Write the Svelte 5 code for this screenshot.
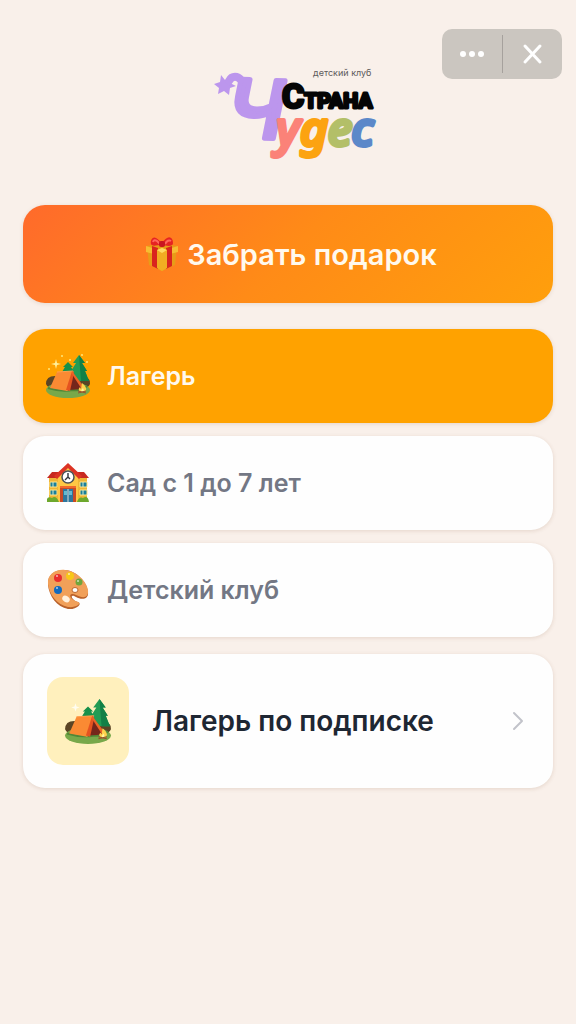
<script>
  const sections = [
    { id: 'camp', label: 'Лагерь' },
    { id: 'garden', label: 'Сад с 1 до 7 лет' },
    { id: 'club', label: 'Детский клуб' }
  ];
  let selected = $state('camp');
</script>

{#snippet tent()}
  <path d="M1 31Q1 22 12 23L38 23Q46 25 45 31Q42 38 23 38Q4 38 1 31Z" fill="#5b4525" />
  <path d="M34 2L28 10H31L26 18H29L25 28H44L40 18H42L37 10H40Z" fill="#229c55" />
  <path d="M34 2L40 10H37L42 18H40L44 28H36Z" fill="#128047" />
  <path d="M23 9L18 14H20L17 19H29L26 14H28Z" fill="#16904a" />
  <path d="M34 28h2v5h-2z" fill="#6c4521" />
  <ellipse cx="23" cy="37" rx="22" ry="8" fill="#78a84a" />
  <path d="M3 35Q16 39 28 37Q37 38 42 33" fill="none" stroke="#508737" stroke-width="2" />
  <path d="M27 18L38 36L24 37Z" fill="#75261b" />
  <path d="M12 19L28 18L22 38L5 35Z" fill="#fa8a33" />
  <path d="M12 19L28 18L22 38" fill="none" stroke="#ffa04f" stroke-width="1" />
  <path d="M27 18L29 20L25 38L21 37Z" fill="#e55320" />
  <path d="M27 18L39 34L36 35L27 21Z" fill="#ec6426" />
  <path d="M37 30Q42 34 41 37Q40 40 36 39Q32 37 35 34L36 36Z" fill="#ffd24c" />
  <path d="M38 35Q40 39 37 39Q35 38 38 35Z" fill="#fff3a1" />
  <path d="M33 40L41 38M33 38L41 40" stroke="#98502b" stroke-width="1" />
{/snippet}

<main class="page">
  <div class="window-controls">
    <button type="button" aria-label="Меню">
      <svg viewBox="0 0 24 24" width="24" height="24" fill="currentColor"><circle cx="3" cy="12" r="3" /><circle cx="12" cy="12" r="3" /><circle cx="21" cy="12" r="3" /></svg>
    </button>
    <button type="button" aria-label="Закрыть">
      <svg viewBox="0 0 24 24" width="24" height="24" fill="none" stroke="currentColor" stroke-width="3" stroke-linecap="round"><path d="M5 4L20 20M20 4L5 20" /></svg>
    </button>
  </div>

  <header class="brand">
    <svg class="logo" viewBox="0 0 164 104" role="img" aria-label="Детский клуб Страна Чудес">
      <path d="M8 11L12 16L18 13L17 19L23 22L17 24L16 31L11 27L5 30L6 24L1 20L7 18Z" fill="#bc96ed" />
      <path class="flourish" d="M16 17C19 11 25 12 28 16" />
      <text class="big" x="15" y="74" transform="rotate(2 40 50)">Ч</text>
      <text class="tagline" x="100" y="12">детский клуб</text>
      <text class="wonders" lang="sr" x="63" y="82"><tspan class="coral">у</tspan><tspan class="amber">д</tspan><tspan class="olive">е</tspan><tspan class="blue">с</tspan></text>
      <text class="strana" x="69" y="44"><tspan class="cap">С</tspan>ТРАНА</text>
    </svg>
  </header>

  <button class="gift" type="button">
    <svg viewBox="0 0 34 36" width="34" height="36" aria-hidden="true">
      <path d="M2 10L17 7L32 10L30 29L17 35L4 29Z" fill="#e89c18" />
      <path d="M1 10L17 15L33 10V16L17 20L1 16Z" fill="#f7bd32" />
      <path d="M7 10L13 12V33L7 30ZM21 12L27 10V30L21 33Z" fill="#d9251e" />
      <path d="M12 14L17 12L22 14V32L17 35L12 32Z" fill="#f1ad22" />
      <path d="M12 14L17 12L22 14L17 17Z" fill="#ffda62" />
      <path d="M17 9C12 9 7 11 6 8C5 4 8 0 11 2Q15 4 17 9ZM17 9C22 10 28 11 28 7C28 2 25 0 22 2Q18 4 17 9Z" fill="#e52422" />
      <path d="M8 6Q9 3 12 5L15 8M20 8Q23 3 26 5" fill="none" stroke="#ff665c" stroke-width="2" />
      <rect x="14" y="5" width="6" height="6" rx="2" fill="#c91520" />
    </svg>
    <span>Забрать подарок</span>
  </button>

  <nav class="sections" aria-label="Разделы">
    {#each sections as section (section.id)}
      <button type="button" class="section" class:active={selected === section.id} aria-pressed={selected === section.id} onclick={() => (selected = section.id)}>
        {#if section.id === 'camp'}
          <svg viewBox="0 0 46 46" width="46" height="46" aria-hidden="true">
            {@render tent()}
            <path d="M11 6L12 10L16 11L12 12L11 16L10 12L6 11L10 10Z" fill="#fff09b" />
            <g fill="#ffe779"><circle cx="17" cy="3" r="1" /><circle cx="25" cy="7" r="1" /><circle cx="4" cy="16" r="1" /><circle cx="37" cy="2" r="1" /><circle cx="42" cy="9" r="1" /></g>
          </svg>
        {:else if section.id === 'garden'}
          <svg viewBox="0 0 46 46" width="46" height="46" aria-hidden="true">
            <path d="M4 18H42V42H4Z" fill="#efb637" />
            <path d="M2 18L7 12H39L44 18Z" fill="#c72920" />
            <path d="M13 42V14L23 6L33 14V42Z" fill="#ffc744" />
            <path d="M9 16L23 3L37 16L34 19L23 8L12 19Z" fill="#dc3424" />
            <circle cx="23" cy="17" r="6" fill="#fff" stroke="#4b5057" stroke-width="1.5" />
            <path d="M23 13V17L20 20M23 17L25 19" fill="none" stroke="#30343b" stroke-width="1.4" />
            <path d="M5 22H12V27H5ZM5 30H12V35H5ZM35 22H42V27H35ZM35 30H42V35H35Z" fill="#197f9b" stroke="#ffe488" />
            <path d="M8 22V27M8 30V35M38 22V27M38 30V35" stroke="#d6ecc9" />
            <rect x="15" y="26" width="16" height="16" fill="#c84926" />
            <path d="M15 27H31" stroke="#f0682b" stroke-width="2" />
            <path d="M18 29H28V42H18Z" fill="#2e779e" />
            <path d="M19 31H22V35H19ZM24 31H27V35H24Z" fill="#64bad0" />
            <path d="M23 29V42" stroke="#d8dfdc" />
            <path d="M2 42V39Q3 36 7 38Q11 35 14 42ZM32 42Q34 36 38 38Q43 35 44 42Z" fill="#6da82d" />
          </svg>
        {:else}
          <svg viewBox="0 0 46 46" width="46" height="46" aria-hidden="true">
            <path d="M3 18C2 7 11 2 20 3C32 4 42 15 43 25C44 33 36 33 31 30C25 26 25 32 33 35C38 37 31 43 23 42C12 40 4 29 3 18Z" fill="#b9612a" />
            <path d="M3 17C2 7 11 2 20 3C32 4 42 15 43 23C44 32 37 31 31 28C23 24 23 32 33 35C37 37 30 41 23 40C12 38 4 27 3 17Z" fill="#f1a059" />
            <circle cx="13" cy="11" r="4" fill="#e92d2c" /><circle cx="25" cy="9" r="4" fill="#f8c719" /><circle cx="34" cy="15" r="3.5" fill="#70a53b" /><circle cx="13" cy="23" r="4" fill="#116abf" />
            <ellipse cx="21" cy="32" rx="4" ry="3" transform="rotate(35 21 32)" fill="#fff0dd" />
            <ellipse cx="30" cy="23" rx="3" ry="2.5" fill="#fff" stroke="#bd672f" />
            <g fill="#fff" opacity=".65"><circle cx="12" cy="9" r="1" /><circle cx="24" cy="7" r="1" /><circle cx="33" cy="14" r="1" /><circle cx="12" cy="21" r="1" /></g>
          </svg>
        {/if}
        <span>{section.label}</span>
      </button>
    {/each}
  </nav>

  <a class="subscription" href="#subscription">
    <span class="thumb">
      <svg viewBox="0 0 46 46" width="48" height="48" aria-hidden="true">
        {@render tent()}
        <path d="M11 6L12 9L15 10L12 11L11 14L10 11L7 10L10 9Z" fill="#fffdf0" />
      </svg>
    </span>
    <span class="title">Лагерь по подписке</span>
    <svg class="chevron" viewBox="0 0 12 20" width="12" height="20" aria-hidden="true"><path d="M2 2L10 10L2 18" /></svg>
  </a>
</main>

<style>
  :global(body) { margin: 0; background: #f9f0ea; }
  .page { position: relative; box-sizing: border-box; min-height: 100vh; padding: 64px 23px 24px; font-family: Inter, sans-serif; }
  button { border: 0; margin: 0; font: inherit; cursor: pointer; }
  svg { display: block; flex: none; }
  .window-controls { position: absolute; top: 29px; right: 14px; display: flex; width: 120px; height: 50px; border-radius: 10px; background: #cbc6c0; }
  .window-controls button { flex: 1; display: grid; place-items: center; padding: 0; background: none; color: #fff; }
  .window-controls button + button::before { content: ""; position: absolute; left: 60px; top: 6px; bottom: 6px; width: 1px; background: #a6a19d; }
  .brand { display: flex; justify-content: center; margin: 0 0 37px; padding-left: 14px; }
  .logo { width: 164px; height: 104px; overflow: visible; }
  .tagline { font-size: 9px; fill: #5d5a5b; }
  .big { font: italic 500 80px Inter, sans-serif; fill: #bc96ed; stroke: #bc96ed; stroke-width: 5; stroke-linejoin: round; }
  .flourish { fill: none; stroke: #bc96ed; stroke-width: 8; stroke-linecap: round; }
  .strana { font: 700 21px Roboto, sans-serif; fill: #050505; stroke: #050505; stroke-width: 3; stroke-linejoin: round; }
  .cap { font-size: 34px; }
  .wonders { font: italic 500 48px "Noto Sans", sans-serif; stroke-width: 4; stroke-linejoin: round; }
  .coral { fill: #fb8278; stroke: #fb8278; }
  .amber { fill: #fca311; stroke: #fca311; }
  .olive { fill: #b3bf68; stroke: #b3bf68; }
  .blue { fill: #5c88c9; stroke: #5c88c9; }
  .gift { display: flex; align-items: center; justify-content: center; gap: 8px; width: 100%; min-height: 98px; padding: 16px 12px 16px 18px; border-radius: 22px; background: linear-gradient(135deg, #ff6a2b, #ff8b17 50%, #ff9f0c); box-shadow: 0 1px 4px #6f3d1820; color: #fff9ee; font-size: 29px; font-weight: 600; }
  .sections { display: flex; flex-direction: column; gap: 13px; margin: 26px 0 17px; }
  .section { display: flex; align-items: center; gap: 16px; min-height: 94px; padding: 16px 22px; border-radius: 22px; background: #fefefe; box-shadow: 0 1px 4px #6f3d1826; color: #737784; font-size: 25px; font-weight: 600; text-align: left; }
  .section.active { background: #ffa200; color: #fff9ee; }
  .subscription { display: flex; align-items: center; gap: 23px; box-sizing: border-box; min-height: 134px; padding: 20px 29px 20px 24px; border-radius: 22px; background: #fefefe; box-shadow: 0 1px 4px #6f3d1826; color: #1e2733; font-size: 28px; font-weight: 600; text-decoration: none; }
  .thumb { display: grid; place-items: center; width: 82px; height: 88px; border-radius: 16px; background: #fff0bd; }
  .title { flex: 1; }
  .chevron { fill: none; stroke: #c2c3ca; stroke-width: 2; stroke-linecap: round; stroke-linejoin: round; }
</style>
